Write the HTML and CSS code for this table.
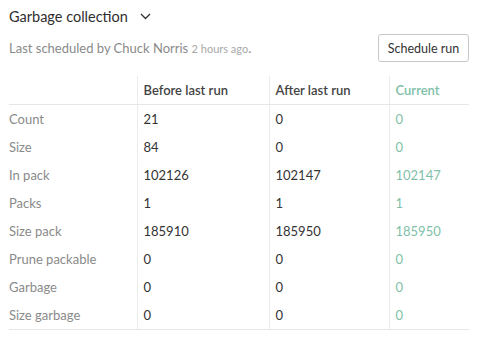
FILE: index.html
```html
<!DOCTYPE html>
<html>
<head>
<meta charset="utf-8">
<link rel="stylesheet" href="styles.css">
</head>
<body>
<div class="panel">
  <div class="title">
    <span>Garbage collection</span>
    <svg class="chev" width="11" height="7" viewBox="0 0 11 7"><path d="M1 1 L5.5 5.5 L10 1" fill="none" stroke="#333" stroke-width="1.3"/></svg>
  </div>
  <div class="meta">
    <div class="sched">Last scheduled by Chuck Norris <span class="ago">2 hours ago</span>.</div>
    <button class="btn">Schedule run</button>
  </div>
  <table class="stats">
    <colgroup><col class="c1"><col class="c2"><col class="c3"><col class="c4"></colgroup>
    <thead>
      <tr><th></th><th>Before last run</th><th>After last run</th><th class="cur">Current</th></tr>
    </thead>
    <tbody>
      <tr><td class="lbl">Count</td><td>21</td><td>0</td><td class="cur">0</td></tr>
      <tr><td class="lbl">Size</td><td>84</td><td>0</td><td class="cur">0</td></tr>
      <tr><td class="lbl">In pack</td><td>102126</td><td>102147</td><td class="cur">102147</td></tr>
      <tr><td class="lbl">Packs</td><td>1</td><td>1</td><td class="cur">1</td></tr>
      <tr><td class="lbl">Size pack</td><td>185910</td><td>185950</td><td class="cur">185950</td></tr>
      <tr><td class="lbl">Prune packable</td><td>0</td><td>0</td><td class="cur">0</td></tr>
      <tr><td class="lbl">Garbage</td><td>0</td><td>0</td><td class="cur">0</td></tr>
      <tr><td class="lbl">Size garbage</td><td>0</td><td>0</td><td class="cur">0</td></tr>
    </tbody>
  </table>
</div>
</body>
</html>
```
FILE: styles.css
```css
html, body { margin: 0; padding: 0; background: #fff; }
body { font-family: Lato, "Open Sans", sans-serif; color: #333; }
.panel { padding: 4px 14px 0 9px; width: 460px; }
.title { display: flex; align-items: center; gap: 12px; font-size: 14.5px; height: 24px; color: #2e2e2e; }
.chev { margin-top: 1px; }
.meta { display: flex; justify-content: space-between; align-items: center; margin-top: 6px; height: 28px; }
.sched { font-size: 13px; color: #8a8a8a; }
.ago { font-size: 11px; color: #a8a8a8; }
.btn { font-family: Lato, sans-serif; font-size: 12.5px; color: #333; background: #fff; border: 1px solid #c8c8c8; border-radius: 3px; height: 28px; width: 91px; padding: 0; margin-right: 0; }
.stats { border-collapse: collapse; width: 460px; table-layout: fixed; margin-top: 14px; font-size: 13px; }
.c1 { width: 128px; } .c2 { width: 132px; } .c3 { width: 120px; } .c4 { width: 80px; }
.stats th, .stats td { height: 28px; padding: 0 6px; text-align: left; vertical-align: middle; }
.stats th { font-weight: 600; color: #444; border-bottom: 1px solid #e6e6e6; }
.stats th + th, .stats td + td { border-left: 1px solid #ececec; }
.stats th:first-child, .stats td:first-child { padding-left: 0; }
.stats tbody tr:last-child td { border-bottom: 1px solid #e6e6e6; }
.stats td { color: #333; }
.stats td.lbl { color: #8a8a8a; }
.stats .cur { color: #7fbfa9; }
```
